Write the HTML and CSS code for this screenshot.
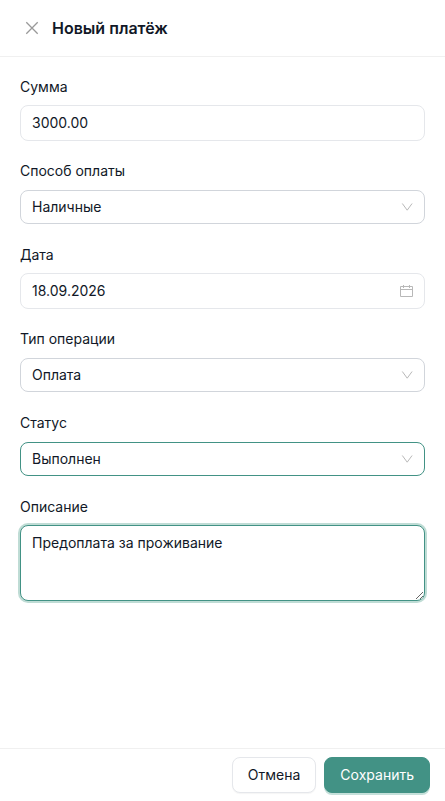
FILE: index.html
```html
<!DOCTYPE html>
<html lang="ru">
<head>
<meta charset="utf-8">
<meta name="viewport" content="width=device-width, initial-scale=1">
<title>Новый платёж</title>
<link rel="stylesheet" href="styles.css">
</head>
<body>
<form class="drawer">
  <header class="drawer-header">
    <button class="close" type="button" aria-label="Закрыть">
      <svg width="16" height="16" viewBox="0 0 16 16" fill="none" stroke="currentColor" stroke-width="1.3"><path d="M2.300 2.300l11.400 11.400M13.700 2.300L2.300 13.700"/></svg>
    </button>
    <h1 class="title">Новый платёж</h1>
  </header>
  <main class="drawer-body">
    <div class="field">
      <label for="amount">Сумма</label>
      <div class="control"><input class="box input" id="amount" type="text" value="3000.00"></div>
    </div>
    <div class="field">
      <label for="method">Способ оплаты</label>
      <div class="control">
        <select class="box select" id="method"><option>Наличные</option></select>
        <svg class="icon" width="12" height="12" viewBox="0 0 12 12" fill="none" stroke="currentColor"><path d="M1.300 2.500L6.200 9.200l4.900-6.700"/></svg>
      </div>
    </div>
    <div class="field">
      <label for="date">Дата</label>
      <div class="control">
        <input class="box input" id="date" type="text" value="18.09.2026">
        <svg class="icon" width="14" height="14" viewBox="0 0 14 14" fill="none" stroke="currentColor"><path d="M1.500 2.500h12v10h-12zM1.500 5.500h12M4.500 1v3M10.500 1v3"/></svg>
      </div>
    </div>
    <div class="field">
      <label for="type">Тип операции</label>
      <div class="control">
        <select class="box select" id="type"><option>Оплата</option></select>
        <svg class="icon" width="12" height="12" viewBox="0 0 12 12" fill="none" stroke="currentColor"><path d="M1.300 2.500L6.200 9.200l4.900-6.700"/></svg>
      </div>
    </div>
    <div class="field">
      <label for="status">Статус</label>
      <div class="control">
        <select class="box select active" id="status"><option>Выполнен</option></select>
        <svg class="icon" width="12" height="12" viewBox="0 0 12 12" fill="none" stroke="currentColor"><path d="M1.300 2.500L6.200 9.200l4.900-6.700"/></svg>
      </div>
    </div>
    <div class="field">
      <label for="note">Описание</label>
      <textarea class="box note" id="note">Предоплата за проживание</textarea>
    </div>
  </main>
  <footer class="drawer-footer">
    <button class="btn" type="button">Отмена</button>
    <button class="btn primary" type="submit">Сохранить</button>
  </footer>
</form>
</body>
</html>
```
FILE: styles.css
```css
* {
  box-sizing: border-box;
}

body {
  margin: 0;
  background: #fff;
  color: #111827;
  font: 14px/20px Inter, sans-serif;
}

.drawer {
  display: flex;
  flex-direction: column;
  min-height: 100vh;
}

.drawer-header {
  display: flex;
  align-items: center;
  gap: 12px;
  padding: 16px 24px;
  border-bottom: 1px solid #f0f0f0;
}

.close {
  display: flex;
  padding: 0;
  border: 0;
  background: none;
  color: #999;
}

.title {
  margin: 0;
  font-size: 16px;
  font-weight: 600;
  line-height: 24px;
}

.drawer-body {
  display: flex;
  flex: 1;
  flex-direction: column;
  gap: 20px;
  padding: 20px;
}

.field {
  display: flex;
  flex-direction: column;
  gap: 8px;
}

.control {
  position: relative;
  display: flex;
  align-items: center;
  height: 36px;
}

.box {
  width: 100%;
  height: 36px;
  padding: 0 11px;
  border: 1px solid #e5e7eb;
  border-radius: 8px;
  outline: none;
  background: #fff;
  color: inherit;
  font: inherit;
}

.input {
  padding-bottom: 2px;
}

.select {
  height: 34px;
  border-color: #d1d5db;
  appearance: none;
}

.active {
  border-color: #429285;
}

.icon {
  position: absolute;
  right: 12px;
  color: #b8b8b8;
  pointer-events: none;
}

.note {
  display: block;
  height: 76px;
  padding: 7px 11px;
  border-color: #429285;
  box-shadow: 0 0 0 2px #bfdcd5;
  resize: vertical;
}

.drawer-footer {
  display: flex;
  justify-content: flex-end;
  gap: 8px;
  padding: 8px 15px;
  border-top: 1px solid #f0f0f0;
}

.btn {
  height: 36px;
  padding: 0 15px;
  border: 1px solid #e5e7eb;
  border-radius: 8px;
  background: #fff;
  box-shadow: 0 1px 1px #f5f5f5;
  color: inherit;
  font: inherit;
}

.primary {
  border-color: #429285;
  background: #429285;
  box-shadow: 0 2px 0 #c5e0da;
  color: #fff;
}
```
